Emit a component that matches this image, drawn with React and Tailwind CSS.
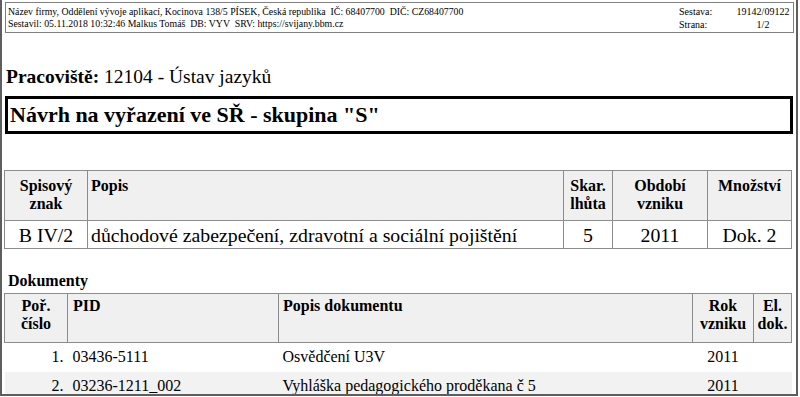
import React from "react";

const skartace = {
    znak: "B IV/2",
    popis: "důchodové zabezpečení, zdravotní a sociální pojištění",
    lhuta: "5",
    obdobi: "2011",
    mnozstvi: "Dok. 2",
};

const dokumenty = [
    { cislo: "1.", pid: "03436-5111", popis: "Osvědčení U3V", rok: "2011", el: "" },
    { cislo: "2.", pid: "03236-1211_002", popis: "Vyhláška pedagogického proděkana č 5", rok: "2011", el: "" },
];

function ReportHeader() {
    return (
        <div className="mt-[2px] h-[31px] border border-[#808080] flex text-[9.8px] leading-[12px] px-[2px] pt-[3px]">
            <div className="flex-1">
                <div className="whitespace-pre">
                    {"Název firmy, Oddělení vývoje aplikací, Kocinova 138/5 PÍSEK, Česká republika  IČ: 68407700  DIČ: CZ68407700"}
                </div>
                <div className="whitespace-pre">
                    {"Sestavil: 05.11.2018 10:32:46 Malkus Tomáš  DB: VYV  SRV: https://svijany.bbm.cz"}
                </div>
            </div>
            <div className="grid grid-cols-[56px_56px] text-[10px]">
                <div>Sestava:</div>
                <div className="text-center">19142/09122</div>
                <div>Strana:</div>
                <div className="text-center">1/2</div>
            </div>
        </div>
    );
}

export default function App() {
    return (
        <div className="w-[800px] h-[397px] overflow-hidden bg-white text-black [font-family:Liberation_Serif,serif]">
            <div className="w-[798px] h-[396px] border-x-2 border-b-2 border-[#5e5e5e] pl-[3px] pr-[2px] overflow-hidden">
                <ReportHeader />

                <div className="mt-[33px] text-[19.5px] leading-[22px] pl-[1px]">
                    <span className="font-bold">Pracoviště:</span> 12104 - Ústav jazyků
                </div>

                <div className="mt-[8px] w-[788px] h-[38px] border-[3px] border-black flex items-center pl-[2px]">
                    <span className="text-[22px] leading-[26px] font-bold">
                        Návrh na vyřazení ve SŘ - skupina "S"
                    </span>
                </div>

                <table className="mt-[36px] -ml-[1px] w-[788px] table-fixed border-collapse">
                    <colgroup>
                        <col className="w-[83px]" />
                        <col className="w-[476px]" />
                        <col className="w-[49px]" />
                        <col className="w-[95px]" />
                        <col />
                    </colgroup>
                    <thead>
                        <tr className="h-[50px] bg-[#f0f0f0] text-[16px] leading-[18px] font-bold">
                            <th className="border border-[#8c8c8c] align-top pt-[6px] text-center">Spisový znak</th>
                            <th className="border border-[#8c8c8c] align-top pt-[6px] pl-[3px] text-left">Popis</th>
                            <th className="border border-[#8c8c8c] align-top pt-[6px] text-center">Skar. lhůta</th>
                            <th className="border border-[#8c8c8c] align-top pt-[6px] text-center px-[14px]">Období vzniku</th>
                            <th className="border border-[#8c8c8c] align-top pt-[6px] text-center">Množství</th>
                        </tr>
                    </thead>
                    <tbody>
                        <tr className="h-[28px] text-[19.8px] leading-[22px]">
                            <td className="border border-[#8c8c8c] text-center">{skartace.znak}</td>
                            <td className="border border-[#8c8c8c] pl-[3px] whitespace-nowrap">{skartace.popis}</td>
                            <td className="border border-[#8c8c8c] text-center">{skartace.lhuta}</td>
                            <td className="border border-[#8c8c8c] text-center">{skartace.obdobi}</td>
                            <td className="border border-[#8c8c8c] text-center">{skartace.mnozstvi}</td>
                        </tr>
                    </tbody>
                </table>

                <div className="mt-[22px] pl-[3px] text-[16px] leading-[20px] font-bold">Dokumenty</div>

                <table className="mt-[2px] -ml-[1px] w-[788px] table-fixed border-collapse">
                    <colgroup>
                        <col className="w-[63px]" />
                        <col className="w-[211px]" />
                        <col className="w-[414px]" />
                        <col className="w-[61px]" />
                        <col />
                    </colgroup>
                    <thead>
                        <tr className="h-[49px] bg-[#f0f0f0] text-[16px] leading-[18px] font-bold">
                            <th className="border border-[#8c8c8c] align-top pt-[3px] text-center">Poř. číslo</th>
                            <th className="border border-[#8c8c8c] align-top pt-[3px] pl-[5px] text-left">PID</th>
                            <th className="border border-[#8c8c8c] align-top pt-[3px] pl-[4px] text-left">Popis dokumentu</th>
                            <th className="border border-[#8c8c8c] align-top pt-[3px] text-center">Rok vzniku</th>
                            <th className="border border-[#8c8c8c] align-top pt-[3px] text-center">El. dok.</th>
                        </tr>
                    </thead>
                    <tbody className="text-[16px] leading-[20px]">
                        {dokumenty.map((d, i) => (
                            <tr key={d.pid} className={`h-[29px] ${i % 2 === 1 ? "bg-[#f2f2f2]" : ""}`}>
                                <td className="text-right pr-[4px]">{d.cislo}</td>
                                <td className="pl-[5px]">{d.pid}</td>
                                <td className="pl-[4px]">{d.popis}</td>
                                <td className="text-center">{d.rok}</td>
                                <td className="text-center">{d.el}</td>
                            </tr>
                        ))}
                    </tbody>
                </table>
            </div>
        </div>
    );
}
